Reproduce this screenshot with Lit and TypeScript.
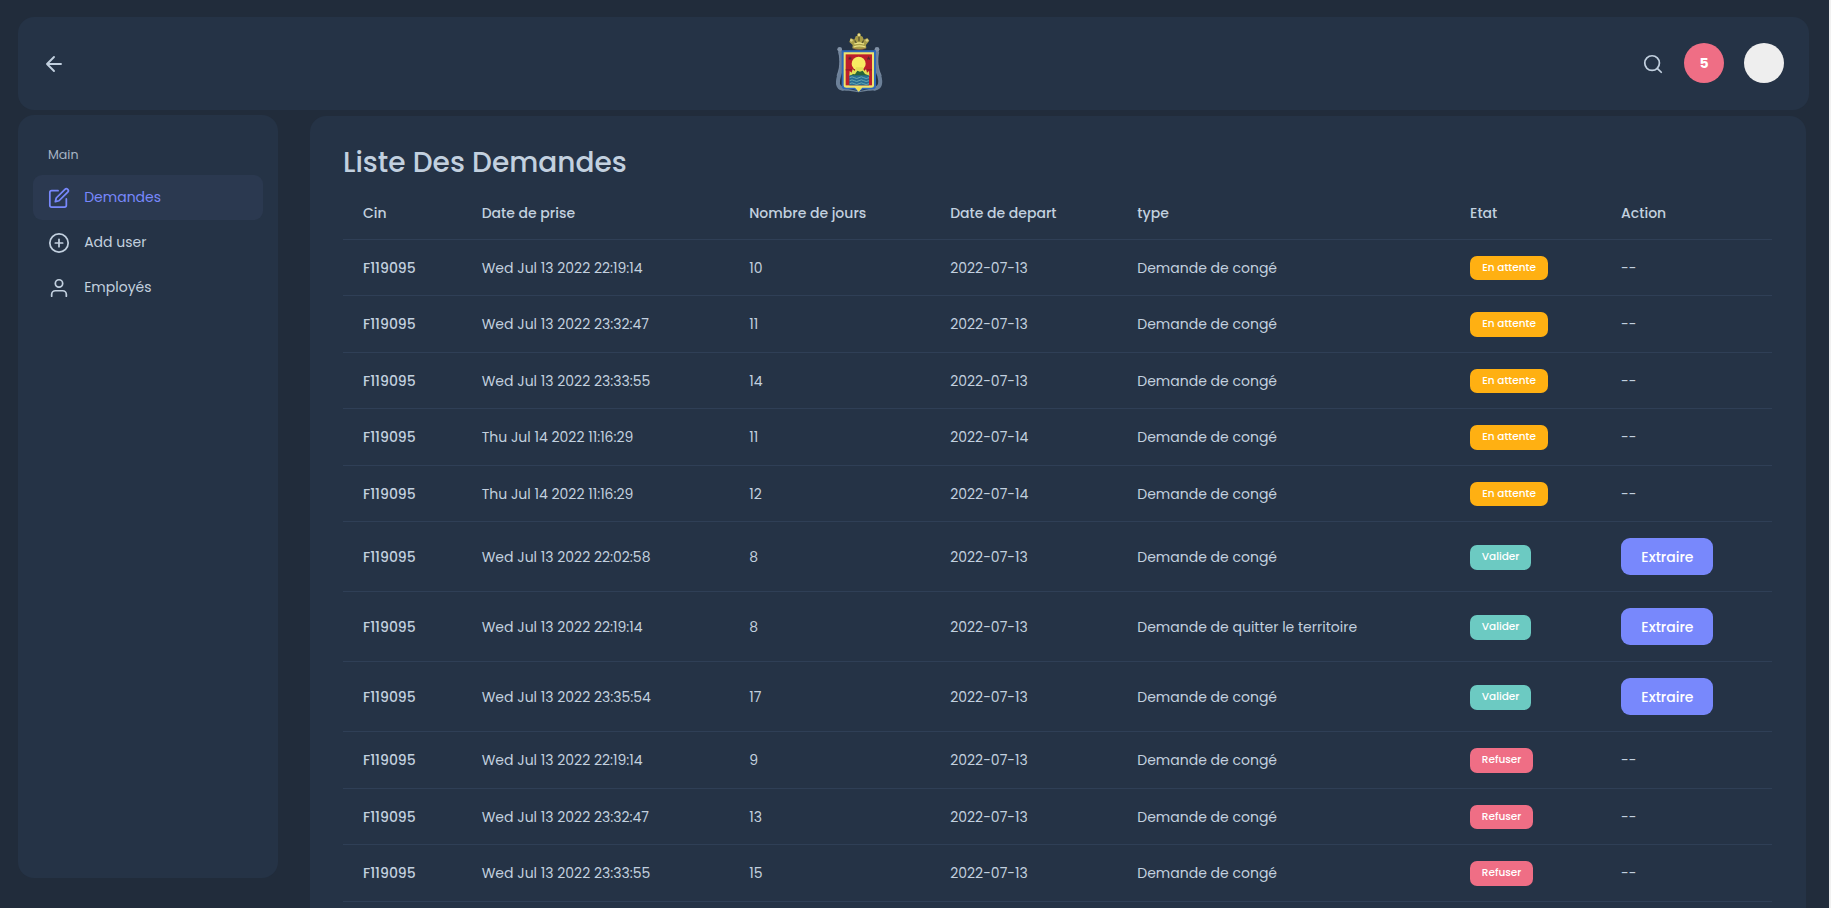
import { LitElement, html, css, svg } from "lit";
import { customElement } from "lit/decorators.js";

type State = "wait" | "ok" | "no";

interface Demand {
  date: string;
  days: number;
  start: string;
  type: string;
  state: State;
}

const CONGE = "Demande de congé";
const QUIT = "Demande de quitter le territoire";

const rows: Demand[] = [
  { date: "Wed Jul 13 2022 22:19:14", days: 10, start: "2022-07-13", type: CONGE, state: "wait" },
  { date: "Wed Jul 13 2022 23:32:47", days: 11, start: "2022-07-13", type: CONGE, state: "wait" },
  { date: "Wed Jul 13 2022 23:33:55", days: 14, start: "2022-07-13", type: CONGE, state: "wait" },
  { date: "Thu Jul 14 2022 11:16:29", days: 11, start: "2022-07-14", type: CONGE, state: "wait" },
  { date: "Thu Jul 14 2022 11:16:29", days: 12, start: "2022-07-14", type: CONGE, state: "wait" },
  { date: "Wed Jul 13 2022 22:02:58", days: 8, start: "2022-07-13", type: CONGE, state: "ok" },
  { date: "Wed Jul 13 2022 22:19:14", days: 8, start: "2022-07-13", type: QUIT, state: "ok" },
  { date: "Wed Jul 13 2022 23:35:54", days: 17, start: "2022-07-13", type: CONGE, state: "ok" },
  { date: "Wed Jul 13 2022 22:19:14", days: 9, start: "2022-07-13", type: CONGE, state: "no" },
  { date: "Wed Jul 13 2022 23:32:47", days: 13, start: "2022-07-13", type: CONGE, state: "no" },
  { date: "Wed Jul 13 2022 23:33:55", days: 15, start: "2022-07-13", type: CONGE, state: "no" },
];

const badges: Record<State, string> = {
  wait: "En attente",
  ok: "Valider",
  no: "Refuser",
};

const columns = ["Cin", "Date de prise", "Nombre de jours", "Date de depart", "type", "Etat", "Action"];

const icons = {
  edit: svg`<path d="M11 4H4a2 2 0 0 0-2 2v14a2 2 0 0 0 2 2h14a2 2 0 0 0 2-2v-7"/><path d="M18.5 2.5a2.121 2.121 0 0 1 3 3L12 15l-4 1 1-4 9.5-9.5z"/>`,
  plus: svg`<circle cx="12" cy="12" r="10"/><path d="M12 8v8M8 12h8"/>`,
  user: svg`<path d="M20 21v-2a4 4 0 0 0-4-4H8a4 4 0 0 0-4 4v2"/><circle cx="12" cy="7" r="4"/>`,
  back: svg`<path d="M19 12H5M12 19l-7-7 7-7"/>`,
  search: svg`<circle cx="11" cy="11" r="8"/><path d="M21 21l-4.35-4.35"/>`,
};

const crest = html`<svg class="crest" viewBox="48 36 141 186">
  <g fill="none" stroke="#6c8098" stroke-width="12" stroke-linecap="round">
    <path d="M60 90C67 118 66 145 57 168C51 190 53 204 68 206"/>
    <path d="M171 90C166 118 167 145 178 168C184 190 181 203 164 206"/>
  </g>
  <g fill="none" stroke="#8596aa" stroke-width="2">
    <path d="M56 96C62 122 60 145 51 167"/><path d="M176 96C171 122 173 145 184 167"/>
  </g>
  <circle cx="59" cy="88" r="7" fill="#8292a6"/><circle cx="171" cy="88" r="7" fill="#8292a6"/>
  <path d="M54 206q16-10 28 0l34 8 34-8q14-10 28 0-20 8-34 6l-28 5-30-5q-18 2-32-6z" fill="#6e8297"/>
  <path d="M65 91H168V199Q168 208 157 208H131Q121 209 116 217Q111 209 101 208H76Q65 208 65 199Z" fill="#2e68b8"/>
  <path d="M71 97H162V197Q162 203 154 203H127L116 215L105 203H79Q71 203 71 197Z" fill="#efe36c"/>
  <path d="M77 103H156V196H77Z" fill="#bd1f2b"/>
  <path d="M77 148H156V151H77Z" fill="#8c1a27"/>
  <circle cx="116" cy="131" r="21" fill="#f8ec62"/>
  <path d="M88 168L89 153 95 158 98 147 104 153 108 142 128 142 133 153 138 147 141 158 147 153 148 168Z" fill="#e3e055"/>
  <path d="M89 168L99 162 105 163 112 152 120 155 128 152 135 162 143 165 147 168Z" fill="#28643a"/>
  <path d="M88 166H147V196H88Z" fill="#286d94"/>
  <g fill="none" stroke="#79b5b4" stroke-width="2.5">
    <path d="M89 173q7-5 14 0t14 0 14 0 16 0"/><path d="M89 182q7-5 14 0t14 0 14 0 16 0"/><path d="M89 191q7-5 14 0t14 0 14 0 16 0"/>
  </g>
  <path d="M90 108l2 5h5l-4 3 2 5-5-3-5 3 2-5-4-3h5zM146 108l2 5h5l-4 3 2 5-5-3-5 3 2-5-4-3h5z" fill="#572a2c"/>
  <path d="M109 205l7 10 7-10-7-4z" fill="#f2df50"/>
  <path d="M97 85L98 75 88 66 92 54 103 59 107 49 112 47 112 42 117 38 122 42 122 47 128 50 131 59 142 54 148 62 138 75 139 85Q118 92 97 85Z" fill="#a99d48"/>
  <path d="M101 81Q118 74 136 81M103 72Q117 66 132 72" stroke="#ece287" stroke-width="4" fill="none"/>
  <path d="M104 61l5 8M117 50v14M131 61l-5 8" stroke="#5c562f" stroke-width="4"/>
  <circle cx="94" cy="61" r="4" fill="#ddd183"/><circle cx="117" cy="45" r="4" fill="#e6dc95"/><circle cx="141" cy="61" r="4" fill="#ddd183"/>
  <path d="M100 86Q118 91 136 86" stroke="#93533a" stroke-width="2" fill="none"/>
</svg>`;

@customElement("app-root")
class AppRoot extends LitElement {
  static styles = css`
    :host {
      display: block;
      box-sizing: border-box;
      width: 100%;
      height: 908px;
      overflow: hidden;
      padding: 17px 20px 0 18px;
      border-right: 2px solid #f1f1f1;
      background: #212c3b;
      color: #c2d0df;
      font: 400 14px/20px Poppins, sans-serif;
    }
    .header {
      box-sizing: border-box;
      height: 93px;
      padding: 0 25px 0 24px;
      border-radius: 16px;
      background: #253346;
      display: grid;
      grid-template-columns: 794px 47px 1fr;
      align-items: center;
    }
    .icon {
      display: block;
      width: 22px;
      height: 22px;
      fill: none;
      stroke: currentColor;
      stroke-width: 1.9;
      stroke-linecap: round;
      stroke-linejoin: round;
      flex: none;
    }
    .icon.back { width: 24px; height: 24px; }
    .crest { display: block; width: 47px; height: 62px; margin-bottom: 1px; }
    .tools { display: flex; justify-content: flex-end; align-items: center; margin-bottom: 1px; }
    .tools .icon { margin: 2px 20px 0 0; }
    .round {
      width: 40px;
      height: 40px;
      border-radius: 50%;
      display: flex;
      align-items: center;
      justify-content: center;
      color: #fff;
      font-weight: 700;
      background: #ef6e85;
    }
    .round.avatar { background: #eee; margin-left: 20px; }
    .body { display: flex; align-items: flex-start; padding-top: 5px; }
    .side {
      box-sizing: border-box;
      width: 260px;
      height: 763px;
      padding: 30px 15px;
      border-radius: 16px;
      background: #253346;
    }
    .caption { padding: 0 15px; height: 30px; line-height: 19px; font-size: 12.6px; color: #a6b4c4; }
    .item {
      height: 45px;
      padding: 0 14.5px;
      border-radius: 9px;
      display: flex;
      align-items: center;
      gap: 14.7px;
    }
    .item span { padding-bottom: 1px; }
    .item.active { background: #2b3950; color: #7888fc; }
    .main {
      box-sizing: border-box;
      width: 1496px;
      height: 900px;
      margin: 1px 0 0 32px;
      padding: 28px 34px 0 33px;
      border-radius: 16px;
      background: #253346;
    }
    .title { margin: 0; height: 43.8px; line-height: 37px; font-size: 28px; font-weight: 500; }
    .row {
      box-sizing: border-box;
      height: 56.5px;
      border-bottom: 1px solid #2f3f56;
      padding-left: 20px;
      display: grid;
      grid-template-columns: 118.7px 267.5px 201px 187.1px 332.8px 151px 1fr;
      align-items: center;
    }
    .row.head { height: 52px; font-weight: 500; }
    .row.tall { height: 70px; }
    .strong { font-weight: 500; }
    .badge {
      box-sizing: border-box;
      display: flex;
      align-items: center;
      justify-content: center;
      height: 24.4px;
      border-radius: 7px;
      padding-bottom: .2px;
      margin-top: .9px;
      color: #fff;
      font-size: 10.5px;
      font-weight: 500;
    }
    .tall .badge { margin-top: 1.3px; }
    .wait { width: 78px; background: #ffb012; }
    .ok { width: 61px; background: #6ccac2; padding-bottom: .8px; }
    .no { width: 63px; background: #ef6e85; }
    .btn {
      width: 92px;
      height: 37px;
      border: 0;
      padding: 0 0 .6px .6px;
      border-radius: 9px;
      background: #7888fc;
      color: #fff;
      font: inherit;
      font-weight: 500;
      display: block;
    }
  `;

  private icon(name: keyof typeof icons) {
    return html`<svg class="icon ${name}" viewBox="0 0 24 24">${icons[name]}</svg>`;
  }

  private row(r: Demand) {
    return html`<div class="row ${r.state === "ok" ? "tall" : ""}">
      <div class="strong">F119095</div>
      <div>${r.date}</div>
      <div>${r.days}</div>
      <div>${r.start}</div>
      <div>${r.type}</div>
      <div><span class="badge ${r.state}">${badges[r.state]}</span></div>
      <div>${r.state === "ok" ? html`<button class="btn">Extraire</button>` : "--"}</div>
    </div>`;
  }

  render() {
    return html`
      <header class="header">
        ${this.icon("back")} ${crest}
        <div class="tools">
          ${this.icon("search")}
          <span class="round">5</span>
          <span class="round avatar"></span>
        </div>
      </header>
      <div class="body">
        <nav class="side">
          <div class="caption">Main</div>
          <div class="item active">${this.icon("edit")}<span>Demandes</span></div>
          <div class="item">${this.icon("plus")}<span>Add user</span></div>
          <div class="item">${this.icon("user")}<span>Employés</span></div>
        </nav>
        <main class="main">
          <h1 class="title">Liste Des Demandes</h1>
          <div class="row head">${columns.map((c) => html`<div>${c}</div>`)}</div>
          ${rows.map((r) => this.row(r))}
        </main>
      </div>
    `;
  }
}
